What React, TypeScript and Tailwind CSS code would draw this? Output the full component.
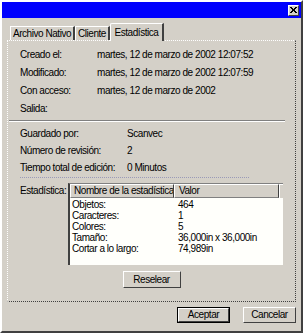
import { FC, ReactElement } from "react";

const Tab: FC<{ label: string; w: string; active?: boolean }> = ({ label, w, active }): ReactElement => (
  <div
    className={
      active
        ? `${w} relative z-10 -mb-px h-[18px] pt-[3px] text-center bg-[#d4d0c8] border-l border-t border-r-2 border-l-white border-t-white border-r-[#404040] rounded-tl-[2px]`
        : `${w} h-[14px] text-center bg-[#d4d0c8] border-l border-t border-r-2 border-l-white border-t-white border-r-[#404040] leading-[13px]`
    }
  >
    {label}
  </div>
);

const InfoRow: FC<{ label: string; value?: string; col: string; h: string }> = ({ label, value, col, h }) => (
  <div className={`flex items-center ${h}`}>
    <div className={col}>{label}</div>
    <div>{value}</div>
  </div>
);

const stats = [
  ["Objetos:", "464"],
  ["Caracteres:", "1"],
  ["Colores:", "5"],
  ["Tamaño:", "36,000in x 36,000in"],
  ["Cortar a lo largo:", "74,989in"],
];

const Btn: FC<{ label: string; w: string; def?: boolean }> = ({ label, w, def }) => (
  <div className={`${w} ${def ? "border border-black" : ""}`}>
    <div className="h-full flex items-center justify-center bg-[#d4d0c8] border-l border-t border-r border-b border-l-white border-t-white border-r-[#404040] border-b-[#404040]">
      {label}
    </div>
  </div>
);

export default function App(): ReactElement {
  return (
    <div className="w-[303px] h-[333px] bg-[#d4d0c8] border-2 border-l-white border-t-white border-r-[#404040] border-b-[#404040] text-[10px] tracking-[-0.45px] leading-[12px] whitespace-nowrap text-black font-['Liberation_Sans',Arial,sans-serif] flex flex-col">
      {/* title bar */}
      <div className="h-[16px] bg-[#0000fe] flex items-center justify-end pr-[2px]">
        <div className="w-[11px] h-[11px] bg-[#d4d0c8] border-l border-t border-r border-b border-l-white border-t-white border-r-[#404040] border-b-[#404040] flex items-center justify-center">
          <svg width="7" height="6" viewBox="0 0 7 6">
            <path d="M0 0L6 6M1 0L7 6M6 0L0 6M7 0L1 6" stroke="black" strokeWidth="1" />
          </svg>
        </div>
      </div>

      {/* tabs */}
      <div className="mt-[5px] h-[17px] pl-[8px] flex items-end">
        <Tab w="w-[65px]" label="Archivo Nativo" />
        <Tab w="w-[35px]" label="Cliente" />
        <Tab w="w-[54px]" label="Estadística" active />
      </div>

      {/* tab page */}
      <div className="mx-[5px] h-[262px] border border-dotted border-l-white border-t-white border-r-[#404040] border-b-[#404040] pt-[5px] flex flex-col">
        <div className="pl-[12px]">
          <InfoRow h="h-[18px]" col="w-[77px]" label="Creado el:" value="martes, 12 de marzo de 2002 12:07:52" />
          <InfoRow h="h-[18px]" col="w-[77px]" label="Modificado:" value="martes, 12 de marzo de 2002 12:07:59" />
          <InfoRow h="h-[18px]" col="w-[77px]" label="Con acceso:" value="martes, 12 de marzo de 2002" />
          <InfoRow h="h-[18px]" col="w-[77px]" label="Salida:" />
        </div>

        <div className="ml-[1px] mr-[10px] mt-[2px] border-t border-b border-t-[#808080] border-b-white" />

        <div className="pl-[12px] mt-[3px]">
          <InfoRow h="h-[17px]" col="w-[107px]" label="Guardado por:" value="Scanvec" />
          <InfoRow h="h-[17px]" col="w-[107px]" label="Número de revisión:" value="2" />
          <InfoRow h="h-[17px]" col="w-[107px]" label="Tiempo total de edición:" value="0 Minutos" />
        </div>

        <div className="ml-[12px] mr-[46px] mt-[1px] border-t border-dotted border-t-[#9a9ab8]" />

        <div className="flex pl-[12px] mt-[5px]">
          <div className="w-[48px] pt-[2px]">Estadística:</div>
          <div className="w-[215px] h-[82px] bg-[#fffffb] border-l-2 border-t border-l-[#404040] border-t-[#808080] flex flex-col overflow-hidden">
            <div className="flex h-[14px] shrink-0">
              <div className="w-[104px] pl-[3px] overflow-hidden bg-[#d4d0c8] border-l border-t border-r border-b border-l-white border-t-white border-r-[#404040] border-b-[#808080]">
                Nombre de la estadística
              </div>
              <div className="w-[105px] pl-[4px] bg-[#d4d0c8] border-l border-t border-r border-b border-l-white border-t-white border-r-[#404040] border-b-[#808080]">
                Valor
              </div>
              <div className="flex-1 bg-[#d4d0c8] border-t border-l border-t-white border-l-white" />
            </div>
            <div className="pt-[1px]">
              {stats.map(([k, v]) => (
                <div key={k} className="flex h-[11px] leading-[11px]">
                  <div className="w-[108px] pl-[2px]">{k}</div>
                  <div>{v}</div>
                </div>
              ))}
            </div>
          </div>
        </div>

        <div className="flex justify-center mt-[6px]">
          <div className="w-[58px] h-[17px] flex items-center justify-center border-l border-t border-r border-b border-l-white border-t-white border-r-[#404040] border-b-[#404040]">
            Reselear
          </div>
        </div>
      </div>

      {/* buttons */}
      <div className="flex justify-end gap-[13px] pr-[5px] mt-[5px]">
        <Btn label="Aceptar" w="w-[53px] h-[16px]" def />
        <Btn label="Cancelar" w="w-[53px] h-[16px]" />
      </div>
    </div>
  );
}
